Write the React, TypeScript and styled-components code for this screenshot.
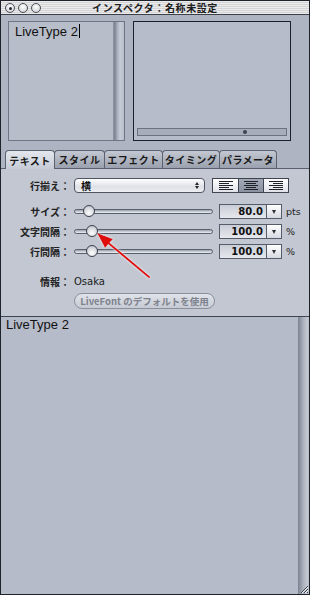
import React from "react";
import styled, { createGlobalStyle } from "styled-components";

const Global = createGlobalStyle`
  html, body { margin: 0; padding: 0; background: #1e222a; }
  * { box-sizing: border-box; }
`;

const JP = `"Noto Sans CJK JP", "Liberation Sans", sans-serif`;

const Window = styled.div`
  width: 310px;
  height: 595px;
  border: 1px solid #1e222a;
  background: #b1b7c4;
  display: flex;
  flex-direction: column;
  position: relative;
  overflow: hidden;
  font-family: ${JP};
`;

const TitleBar = styled.div`
  height: 14px;
  flex: none;
  position: relative;
  display: flex;
  align-items: center;
  justify-content: center;
  background: repeating-linear-gradient(
    to bottom,
    #ebebeb 0px,
    #ebebeb 1px,
    #d4d4d6 1px,
    #d4d4d6 2px
  );
  border-bottom: 1px solid #3b3f48;
`;

const Lights = styled.div`
  position: absolute;
  left: 4px;
  top: 2px;
  display: flex;
  gap: 3px;
`;

const Light = styled.div<{ $dot?: boolean }>`
  width: 10px;
  height: 10px;
  border-radius: 50%;
  border: 1px solid #4d5058;
  background: radial-gradient(circle at 50% 35%, #ffffff, #c9cbd0);
  display: flex;
  align-items: center;
  justify-content: center;
  &::after {
    content: "";
    width: 3px;
    height: 3px;
    border-radius: 50%;
    background: ${(p) => (p.$dot ? "#2a2d33" : "transparent")};
  }
`;

const Title = styled.div`
  font-size: 10px;
  font-weight: 700;
  color: #1c1c1c;
  letter-spacing: 0.6px;
  line-height: 14px;
`;

const TopArea = styled.div`
  height: 132px;
  flex: none;
  display: flex;
  gap: 8px;
  padding: 6px 0 0 7px;
  background: #aeb4c1;
`;

const SourceBox = styled.div`
  width: 117px;
  height: 120px;
  border: 1px solid #6f7583;
  display: flex;
  background: #b8bdca;
`;

const SourceText = styled.div`
  flex: 1;
  padding: 2px 0 0 6px;
  font-family: "Liberation Sans", "Noto Sans", sans-serif;
  font-size: 13px;
  color: #111;
  line-height: 15px;
  display: flex;
  align-items: flex-start;
`;

const Caret = styled.span`
  display: inline-block;
  width: 1px;
  height: 14px;
  background: #000;
  margin-left: 1px;
`;

const Scroller = styled.div`
  width: 11px;
  flex: none;
  background: linear-gradient(
    to right,
    #8d93a1 0px,
    #7f8593 2px,
    #a5abb8 4px,
    #c6cbd5 7px,
    #b9bfca 11px
  );
`;

const Preview = styled.div`
  width: 158px;
  height: 120px;
  border: 1px solid #1c2028;
  background: #b7bcca;
  display: flex;
  flex-direction: column;
  justify-content: flex-end;
  padding: 0 3px 4px 3px;
`;

const PreviewBar = styled.div`
  height: 8px;
  border: 1px solid #6c7280;
  background: #a7adba;
  position: relative;
  &::after {
    content: "";
    position: absolute;
    left: 105px;
    top: 1px;
    width: 4px;
    height: 4px;
    border-radius: 50%;
    background: #3f434c;
  }
`;

const TabRow = styled.div`
  height: 21px;
  flex: none;
  display: flex;
  align-items: flex-end;
  padding-left: 4px;
  background: #aeb4c1;
`;

const Tab = styled.div<{ $active?: boolean; $w: number }>`
  width: ${(p) => p.$w}px;
  border: 1px solid #5c6270;
  border-bottom: none;
  border-radius: 4px 4px 0 0;
  margin-right: -1px;
  display: flex;
  align-items: center;
  justify-content: center;
  font-size: 10px;
  font-weight: 700;
  color: #1a1a1a;
  letter-spacing: 0.5px;
  background: ${(p) =>
    p.$active
      ? "linear-gradient(to bottom, #e4e7ec, #c6cbd6)"
      : "linear-gradient(to bottom, #c3c8d2, #9aa0ad)"};
  position: relative;
  z-index: ${(p) => (p.$active ? 2 : 1)};
  margin-bottom: ${(p) => (p.$active ? "-1px" : "0")};
  height: ${(p) => (p.$active ? "19px" : "18px")};
`;

const Panel = styled.div`
  height: 148px;
  flex: none;
  border-top: 1px solid #596070;
  background: #c2c7d2;
  position: relative;
  padding-top: 9px;
  display: flex;
  flex-direction: column;
`;

const Row = styled.div<{ $mt?: number }>`
  display: flex;
  align-items: center;
  height: 15px;
  margin-top: ${(p) => p.$mt ?? 0}px;
`;

const Label = styled.div`
  width: 69px;
  flex: none;
  text-align: right;
  font-size: 10px;
  font-weight: 700;
  color: #222;
  margin-right: 4px;
  white-space: nowrap;
`;

const Popup = styled.div`
  width: 131px;
  height: 15px;
  border: 1px solid #4e5462;
  border-radius: 4px;
  background: linear-gradient(to bottom, #ffffff, #dde0e6 60%, #eceef2);
  display: flex;
  align-items: center;
  justify-content: space-between;
  padding: 0 5px 0 6px;
  font-size: 10px;
  font-weight: 700;
  color: #111;
`;

const Stepper = styled.span`
  display: flex;
  flex-direction: column;
  align-items: center;
  gap: 1px;
  &::before,
  &::after {
    content: "";
    width: 0;
    height: 0;
    border-left: 2px solid transparent;
    border-right: 2px solid transparent;
  }
  &::before {
    border-bottom: 3px solid #222;
  }
  &::after {
    border-top: 3px solid #222;
  }
`;

const Segments = styled.div`
  margin-left: 7px;
  display: flex;
  border: 1px solid #3e4450;
  height: 15px;
`;

const Segment = styled.div<{ $on?: boolean }>`
  width: 25px;
  height: 13px;
  display: flex;
  align-items: center;
  justify-content: center;
  border-left: 1px solid #3e4450;
  &:first-child {
    border-left: none;
  }
  background: ${(p) =>
    p.$on
      ? "linear-gradient(to bottom, #a2a8b6, #8a91a0)"
      : "linear-gradient(to bottom, #ffffff, #dfe2e8)"};
`;

const Track = styled.div`
  width: 139px;
  height: 5px;
  border: 1px solid #59606d;
  border-radius: 3px;
  background: linear-gradient(to bottom, #9ca2ae, #eef0f3);
  position: relative;
`;

const Knob = styled.div`
  position: absolute;
  top: -5px;
  width: 12px;
  height: 12px;
  border-radius: 50%;
  border: 1px solid #3b404a;
  background: radial-gradient(circle at 50% 70%, #ffffff, #b6bbc5);
`;

const Field = styled.div`
  margin-left: 6px;
  display: flex;
  height: 15px;
  border: 1px solid #555b68;
  background: #d8dce3;
`;

const FieldValue = styled.div`
  width: 46px;
  text-align: right;
  padding-right: 3px;
  font-family: "DejaVu Sans", sans-serif;
  font-size: 10px;
  font-weight: 700;
  line-height: 13px;
  color: #111;
  background: linear-gradient(to bottom, #c9cdd6, #e6e8ed);
`;

const FieldDrop = styled.div`
  width: 15px;
  border-left: 1px solid #555b68;
  background: linear-gradient(to bottom, #ffffff, #d7dae1);
  display: flex;
  align-items: center;
  justify-content: center;
  &::after {
    content: "";
    border-left: 2.5px solid transparent;
    border-right: 2.5px solid transparent;
    border-top: 4px solid #2b2f37;
  }
`;

const Unit = styled.div`
  margin-left: 4px;
  font-family: "DejaVu Sans", sans-serif;
  font-size: 9.5px;
  color: #222;
`;

const Info = styled.div`
  font-family: "DejaVu Sans", sans-serif;
  font-size: 10px;
  color: #1a1a1a;
`;

const PillButton = styled.div`
  margin-left: 73px;
  width: 141px;
  height: 16px;
  border: 1px solid #8a909c;
  border-radius: 8px;
  background: linear-gradient(to bottom, #e0e3e9, #c6cad3);
  display: flex;
  align-items: center;
  justify-content: center;
  font-size: 9.5px;
  font-weight: 700;
  color: #7d828d;
  white-space: nowrap;
`;

const Arrow = styled.svg`
  position: absolute;
  left: 0;
  top: 0;
  pointer-events: none;
`;

const Bottom = styled.div`
  flex: 1;
  display: flex;
  border-top: 1px solid #3f4552;
  background: #b5bbc8;
`;

const BottomText = styled.div`
  flex: 1;
  padding: 0 0 0 5px;
  font-family: "Liberation Sans", "Noto Sans", sans-serif;
  font-size: 13px;
  color: #111;
  line-height: 15px;
`;

const BottomScroller = styled.div`
  width: 11px;
  flex: none;
  position: relative;
  background: linear-gradient(
    to right,
    #7c8290 0px,
    #8e94a2 2px,
    #a9afbb 5px,
    #c3c8d2 9px,
    #b9bfca 11px
  );
`;

const Grip = styled.svg`
  position: absolute;
  right: 0;
  bottom: 0;
`;

const AlignIcon: React.FC<{ mode: "l" | "c" | "r" }> = ({ mode }) => {
  const widths = [14, 10, 14, 10, 14];
  return (
    <svg width="16" height="9" viewBox="0 0 16 9">
      {widths.map((w, i) => {
        const x = mode === "l" ? 1 : mode === "r" ? 15 - w : (16 - w) / 2;
        return <rect key={i} x={x} y={i * 2} width={w} height="1" fill="#1e2128" />;
      })}
    </svg>
  );
};

const SliderRow: React.FC<{ label: string; knob: number; value: string; unit: string; mt: number }> = ({
  label,
  knob,
  value,
  unit,
  mt,
}) => (
  <Row $mt={mt}>
    <Label>{label}</Label>
    <Track>
      <Knob style={{ left: knob }} />
    </Track>
    <Field>
      <FieldValue>{value}</FieldValue>
      <FieldDrop />
    </Field>
    <Unit>{unit}</Unit>
  </Row>
);

export default function App() {
  return (
    <>
      <Global />
      <Window>
        <TitleBar>
          <Lights>
            <Light $dot />
            <Light />
            <Light />
          </Lights>
          <Title>インスペクタ：名称未設定</Title>
        </TitleBar>
        <TopArea>
          <SourceBox>
            <SourceText>
              LiveType 2<Caret />
            </SourceText>
            <Scroller />
          </SourceBox>
          <Preview>
            <PreviewBar />
          </Preview>
        </TopArea>
        <TabRow>
          <Tab $active $w={50}>テキスト</Tab>
          <Tab $w={51}>スタイル</Tab>
          <Tab $w={59}>エフェクト</Tab>
          <Tab $w={58}>タイミング</Tab>
          <Tab $w={58}>パラメータ</Tab>
        </TabRow>
        <Panel>
          <Row>
            <Label>行揃え：</Label>
            <Popup>
              <span>横</span>
              <Stepper />
            </Popup>
            <Segments>
              <Segment>
                <AlignIcon mode="l" />
              </Segment>
              <Segment $on>
                <AlignIcon mode="c" />
              </Segment>
              <Segment>
                <AlignIcon mode="r" />
              </Segment>
            </Segments>
          </Row>
          <SliderRow label="サイズ：" knob={8} value="80.0" unit="pts" mt={11} />
          <SliderRow label="文字間隔：" knob={11} value="100.0" unit="%" mt={5} />
          <SliderRow label="行間隔：" knob={11} value="100.0" unit="%" mt={5} />
          <Row $mt={15}>
            <Label>情報：</Label>
            <Info>Osaka</Info>
          </Row>
          <Row $mt={4}>
            <PillButton>LiveFont のデフォルトを使用</PillButton>
          </Row>
          <Arrow width="310" height="148" viewBox="0 0 310 148">
            <defs>
              <filter id="sh" x="-20%" y="-20%" width="140%" height="140%">
                <feDropShadow dx="0" dy="0" stdDeviation="0.8" floodColor="#ffffff" floodOpacity="0.9" />
              </filter>
            </defs>
            <g filter="url(#sh)">
              <line x1="148" y1="108" x2="105" y2="72" stroke="#e01010" strokeWidth="2.2" strokeLinecap="round" />
              <polygon points="96,64 112,70 104,79" fill="#e01010" />
            </g>
          </Arrow>
        </Panel>
        <Bottom>
          <BottomText>LiveType 2</BottomText>
          <BottomScroller>
            <Grip width="11" height="11" viewBox="0 0 11 11">
              <path d="M10 3 L3 10 M10 6 L6 10 M10 9 L9 10" stroke="#3a3e46" strokeWidth="1" />
              <path d="M10 4 L4 10 M10 7 L7 10" stroke="#f2f3f5" strokeWidth="1" />
            </Grip>
          </BottomScroller>
        </Bottom>
      </Window>
    </>
  );
}
